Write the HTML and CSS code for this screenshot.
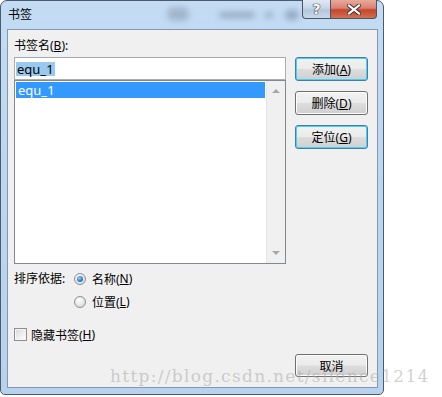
FILE: index.html
```html
<!DOCTYPE html>
<html lang="zh-CN">
<head>
  <meta charset="UTF-8" />
  <title>书签</title>
  <link rel="stylesheet" href="styles.css">
</head>
<body>
  <div class="window">
    <div class="titlebar">
      <span class="title">书签</span>
      <span class="blur b1"></span>
      <span class="blur b2"></span>
      <span class="blur b3"></span>
      <span class="blur b4"></span>
      <div class="controls">
        <span class="ctl help">?</span>
        <span class="ctl close">
          <svg width="14" height="11" viewBox="0 0 14 11">
            <path d="M2 1.5 L12 9.5 M12 1.5 L2 9.5" stroke="#3a3030" stroke-width="4" stroke-linecap="square" />
            <path d="M2 1.5 L12 9.5 M12 1.5 L2 9.5" stroke="#fff" stroke-width="2.2" stroke-linecap="square" />
          </svg>
        </span>
      </div>
    </div>

    <div class="client">
      <div class="left">
        <div class="field-label">书签名(<u>B</u>):</div>
        <div class="textbox"><span class="sel">equ_1</span></div>
        <div class="listbox">
          <div class="items">
            <div class="item selected">equ_1</div>
          </div>
          <div class="scrollbar">
            <span class="arrow up"></span>
            <span class="arrow down"></span>
          </div>
        </div>
        <div class="sort">
          <span class="sort-label">排序依据:</span>
          <div class="radios">
            <div class="option"><span class="radio checked"></span>名称(<u>N</u>)</div>
            <div class="option"><span class="radio"></span>位置(<u>L</u>)</div>
          </div>
        </div>
        <div class="option check-row"><span class="checkbox"></span>隐藏书签(<u>H</u>)</div>
      </div>

      <div class="right">
        <button class="btn default">添加(<u>A</u>)</button>
        <button class="btn">删除(<u>D</u>)</button>
        <button class="btn default">定位(<u>G</u>)</button>
        <button class="btn cancel">取消</button>
      </div>
    </div>
  </div>

  <div class="watermark">http://blog.csdn.net/silence1214</div>
</body>
</html>
```

FILE: styles.css
```css
body {
  margin: 0;
  background: #fff;
  font-family: "Noto Sans", "Noto Sans CJK SC", sans-serif;
  font-size: 12px;
  color: #000;
  position: relative;
  width: 442px;
  height: 397px;
  overflow: hidden;
}
.window {
  width: 384px;
  height: 395px;
  box-sizing: border-box;
  border: 1px solid #4b5a6d;
  border-radius: 7px 7px 5px 5px;
  background: linear-gradient(to bottom, #c3dcf4 0%, #bcd7f1 40%, #b6d2ee 100%);
  padding: 0 5px 6px 6px;
  display: flex;
  flex-direction: column;
}
.titlebar {
  height: 28px;
  display: flex;
  align-items: center;
  padding-left: 1px;
  position: relative;
}
.title {
  font-size: 12px;
  line-height: 16px;
  padding-bottom: 1px;
}
.blur {
  position: absolute;
  background: #6e7f94;
  filter: blur(3px);
  opacity: 0.55;
  border-radius: 6px;
}
.b1 { left: 160px; top: 6px; width: 22px; height: 14px; opacity: 0.4; }
.b2 { left: 212px; top: 11px; width: 36px; height: 6px; }
.b3 { left: 258px; top: 11px; width: 8px; height: 6px; }
.b4 { left: 278px; top: 9px; width: 14px; height: 10px; }
.controls {
  margin-left: auto;
  margin-right: 1px;
  align-self: flex-start;
  margin-top: -1px;
  display: flex;
  position: relative;
  z-index: 1;
}
.ctl {
  height: 19px;
  border: 1px solid #4a5566;
  border-top: none;
  display: flex;
  align-items: center;
  justify-content: center;
  box-sizing: border-box;
}
.help {
  width: 28px;
  border-radius: 0 0 0 4px;
  border-right: none;
  background: linear-gradient(to bottom, #dfe9f4 0%, #c7d6e7 45%, #b4c6dc 55%, #c8d9ec 100%);
  color: #fff;
  font-family: "DejaVu Sans", sans-serif;
  font-weight: bold;
  font-size: 14px;
  text-shadow: 0 0 1px #333, 0 0 1px #333, 0 0 1px #333;
}
.close {
  width: 47px;
  border-radius: 0 0 4px 0;
  background: linear-gradient(to bottom, #e9a99b 0%, #d98270 45%, #c5452e 55%, #d2704f 100%);
}
.client {
  flex: 1;
  border: 1px solid #8796aa;
  background: #f0f0f0;
  padding: 8px 9px 10px 6px;
  display: grid;
  grid-template-columns: 272px 73px;
  column-gap: 9px;
}
.left {
  display: flex;
  flex-direction: column;
}
.field-label {
  line-height: 16px;
  margin-bottom: 3px;
}
.textbox {
  height: 23px;
  box-sizing: border-box;
  border: 1px solid #abadb3;
  border-top-color: #a6a8ae;
  background: #fff;
  padding: 3px 1px;
  display: flex;
  align-items: center;
}
.sel {
  background: #99c9ef;
  line-height: 14px;
  padding: 0 1px;
  font-size: 13px;
}
.listbox {
  height: 184px;
  box-sizing: border-box;
  border: 1px solid #828790;
  background: #fff;
  display: flex;
}
.items {
  flex: 1;
  padding: 1px;
}
.item {
  height: 16px;
  line-height: 16px;
  padding-left: 2px;
  font-size: 13px;
}
.selected {
  background: #3399ff;
  color: #fff;
}
.scrollbar {
  width: 18px;
  background: #f0f0f0;
  border-left: 1px solid #e6e6e6;
  display: flex;
  flex-direction: column;
  justify-content: space-between;
  align-items: center;
  padding: 8px 0 8px;
}
.arrow {
  width: 0;
  height: 0;
  border-left: 4px solid transparent;
  border-right: 4px solid transparent;
}
.up { border-bottom: 4px solid #a8a8a8; }
.down { border-top: 4px solid #a8a8a8; }
.sort {
  display: flex;
  margin-top: 3px;
}
.sort-label {
  width: 60px;
  line-height: 23px;
}
.option {
  height: 23px;
  display: flex;
  align-items: center;
}
.radio {
  width: 12px;
  height: 12px;
  box-sizing: border-box;
  border-radius: 50%;
  border: 1px solid #8e8f8f;
  background: radial-gradient(circle at 40% 35%, #ffffff 0%, #e4e4e4 60%, #cfcfcf 100%);
  margin-right: 6px;
  position: relative;
}
.radio.checked::after {
  content: "";
  position: absolute;
  left: 2px;
  top: 2px;
  width: 6px;
  height: 6px;
  border-radius: 50%;
  background: radial-gradient(circle at 40% 35%, #8fd3ff 0%, #2f7fcf 55%, #1a4f8f 100%);
}
.check-row {
  margin-top: 10px;
}
.checkbox {
  width: 13px;
  height: 13px;
  box-sizing: border-box;
  border: 1px solid #8e8f8f;
  background: linear-gradient(135deg, #d8d8d8 0%, #f4f4f4 70%, #ffffff 100%);
  box-shadow: inset 0 0 0 1px #f4f4f4;
  margin-right: 4px;
}
.right {
  display: flex;
  flex-direction: column;
  padding-top: 19px;
  gap: 10px;
}
.btn {
  height: 24px;
  padding: 0;
  font-family: "Noto Sans", "Noto Sans CJK SC", sans-serif;
  font-size: 12px;
  color: #000;
  border: 1px solid #707070;
  border-radius: 3px;
  background: linear-gradient(to bottom, #f2f2f2 0%, #ebebeb 48%, #dddddd 52%, #cfcfcf 100%);
  box-shadow: inset 0 0 0 1px #fcfcfc;
}
.btn.default {
  border-color: #3c7fb1;
  box-shadow: inset 0 0 0 1px #48d1f8;
}
.cancel {
  margin-top: auto;
  height: 23px;
}
.watermark {
  position: absolute;
  left: 110px;
  top: 366px;
  font-family: "DejaVu Serif", serif;
  font-size: 17px;
  letter-spacing: 1.3px;
  color: rgba(170, 170, 170, 0.55);
  white-space: nowrap;
}
```
